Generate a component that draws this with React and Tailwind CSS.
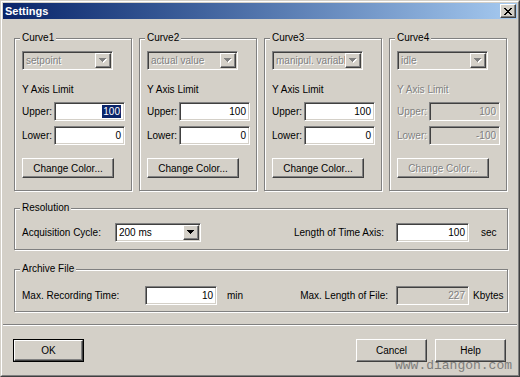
import React from "react";

const SUNKEN =
  "border border-t-[#808080] border-l-[#808080] border-b-white border-r-white shadow-[inset_1px_1px_0_#404040,inset_-1px_-1px_0_#d4d0c8]";
const RAISED =
  "border border-t-white border-l-white border-b-[#404040] border-r-[#404040] shadow-[inset_-1px_-1px_0_#808080]";
const ETCHED = "border border-[#808080] shadow-[inset_1px_1px_0_#fff,1px_1px_0_#fff]";
const DIS = "text-[#808080] [text-shadow:1px_1px_0_#fff]";

function Arrow({ disabled }) {
  const d = "M0 0h7v1h-1v1h-1v1h-1v1h-1v-1h-1v-1h-1v-1h-1z";
  return (
    <svg width="8" height="5" viewBox="0 0 8 5" className="block">
      {disabled && <path d={d} fill="#ffffff" transform="translate(1 1)" />}
      <path d={d} fill={disabled ? "#808080" : "#000000"} />
    </svg>
  );
}

function CloseX() {
  const rows = ["XX....XX", ".XX..XX.", "..XXXX..", "...XX...", "..XXXX..", ".XX..XX.", "XX....XX"];
  const rects = [];
  rows.forEach((r, y) =>
    r.split("").forEach((c, x) => {
      if (c === "X") rects.push(<rect key={`${x}-${y}`} x={x} y={y} width="1" height="1" fill="#000" />);
    })
  );
  return (
    <svg width="8" height="7" viewBox="0 0 8 7" className="block" shapeRendering="crispEdges">
      {rects}
    </svg>
  );
}

function Combo({ text, disabled, w }) {
  return (
    <div className={`${SUNKEN} ${w} h-[19px] flex items-stretch p-[1px] ${disabled ? "bg-[#d4d0c8]" : "bg-white"}`}>
      <div
        className={`flex-1 pl-[2px] leading-[15px] overflow-hidden whitespace-nowrap ${
          disabled ? DIS : "text-black"
        }`}
      >
        {text}
      </div>
      <div className={`${RAISED} bg-[#d4d0c8] w-[16px] flex items-center justify-center`}>
        <Arrow disabled={disabled} />
      </div>
    </div>
  );
}

function Field({ children, disabled, w }) {
  return (
    <div
      className={`${SUNKEN} ${w} h-[19px] flex items-center justify-end pr-[3px] leading-[13px] ${
        disabled ? "bg-[#d4d0c8] " + DIS : "bg-white text-black"
      }`}
    >
      {children}
    </div>
  );
}

function Btn({ children, w, disabled }) {
  return (
    <div
      className={`${RAISED} ${w} h-[20px] bg-[#d4d0c8] flex items-center justify-center leading-[13px] ${
        disabled ? DIS : "text-black"
      }`}
    >
      {children}
    </div>
  );
}

function GroupLabel({ children }) {
  return (
    <span className="absolute left-[5px] top-[-8px] px-[2px] bg-[#d4d0c8] leading-[13px] text-black">
      {children}
    </span>
  );
}

function CurveGroup({ title, combo, upper, lower, disabled, selected }) {
  const lbl = disabled ? DIS : "text-black";
  return (
    <div className={`relative ${ETCHED} w-[118px] h-[153px] pt-[12px] pl-[7px] flex flex-col`}>
      <GroupLabel>{title}</GroupLabel>
      <Combo text={combo} disabled w="w-[91px]" />
      <div className={`mt-[13px] leading-[13px] ${lbl}`}>Y Axis Limit</div>
      <div className="mt-[6px] flex items-center">
        <div className={`w-[32px] leading-[13px] ${lbl}`}>Upper:</div>
        <Field w="w-[71px]" disabled={disabled}>
          {selected ? <span className="bg-[#0a246a] text-white px-[1px]">{upper}</span> : upper}
        </Field>
      </div>
      <div className="mt-[5px] flex items-center">
        <div className={`w-[32px] leading-[13px] ${lbl}`}>Lower:</div>
        <Field w="w-[71px]" disabled={disabled}>
          {lower}
        </Field>
      </div>
      <div className="mt-[13px]">
        <Btn w="w-[92px]" disabled={disabled}>
          Change Color...
        </Btn>
      </div>
    </div>
  );
}

export default function App() {
  return (
    <div className="relative w-[520px] h-[377px] font-['Liberation_Sans',Arial,sans-serif] text-[10px] text-black border border-t-[#d4d0c8] border-l-[#d4d0c8] border-b-[#404040] border-r-[#404040] bg-[#d4d0c8]">
      <div className="w-full h-full border border-t-white border-l-white border-b-[#808080] border-r-[#808080] p-[1px] flex flex-col">
        {/* Title bar */}
        <div className="h-[16px] bg-linear-to-r from-[#0a246a] to-[#a6caf0] flex items-center pl-[2px] pr-[1px] shrink-0">
          <span className="text-white font-bold text-[11px] leading-[14px]">Settings</span>
          <div className={`ml-auto ${RAISED} bg-[#d4d0c8] w-[16px] h-[14px] flex items-center justify-center`}>
            <CloseX />
          </div>
        </div>

        {/* Body */}
        <div className="pl-[11px] pr-[9px] pt-[19px] flex flex-col">
          <div className="flex gap-[7px]">
            <CurveGroup title="Curve1" combo="setpoint" upper="100" lower="0" selected />
            <CurveGroup title="Curve2" combo="actual value" upper="100" lower="0" />
            <CurveGroup title="Curve3" combo="manipul. variabl" upper="100" lower="0" />
            <CurveGroup title="Curve4" combo="idle" upper="100" lower="-100" disabled />
          </div>

          {/* Resolution */}
          <div className={`relative ${ETCHED} mt-[17px] h-[42px] pl-[7px] pt-[14px] flex items-start`}>
            <GroupLabel>Resolution</GroupLabel>
            <div className="w-[93px] leading-[19px]">Acquisition Cycle:</div>
            <Combo text="200 ms" w="w-[86px]" />
            <div className="ml-auto mr-[12px] leading-[19px]">Length of Time Axis:</div>
            <Field w="w-[73px]">100</Field>
            <div className="w-[38px] pl-[12px] leading-[19px]">sec</div>
          </div>

          {/* Archive File */}
          <div className={`relative ${ETCHED} mt-[19px] h-[43px] pl-[7px] pt-[16px] flex items-start`}>
            <GroupLabel>Archive File</GroupLabel>
            <div className="w-[123px] leading-[19px]">Max. Recording Time:</div>
            <Field w="w-[72px]">10</Field>
            <div className="pl-[10px] leading-[19px]">min</div>
            <div className="ml-auto mr-[8px] leading-[19px]">Max. Length of File:</div>
            <Field w="w-[73px]" disabled>
              227
            </Field>
            <div className="w-[38px] pl-[4px] leading-[19px]">Kbytes</div>
          </div>
        </div>

        {/* Separator */}
        <div className="mt-[12px] h-[2px] border-t border-t-[#808080] border-b border-b-white shrink-0" />

        {/* Buttons */}
        <div className="mt-[13px] pl-[10px] pr-[11px] flex items-start">
          <div className="border border-black w-[71px] h-[23px]">
            <div className={`${RAISED} w-full h-full flex items-center justify-center leading-[13px]`}>OK</div>
          </div>
          <div className="ml-auto flex gap-[8px]">
            <div className={`${RAISED} w-[71px] h-[23px] flex items-center justify-center leading-[13px]`}>Cancel</div>
            <div className={`${RAISED} w-[71px] h-[23px] flex items-center justify-center leading-[13px]`}>Help</div>
          </div>
        </div>
      </div>

      <div className="absolute left-[394px] top-[357px] font-['Liberation_Mono',monospace] text-[13px] leading-[15px] text-[#6a6a6a] opacity-80 pointer-events-none">
        www.diangon.com
      </div>
    </div>
  );
}
